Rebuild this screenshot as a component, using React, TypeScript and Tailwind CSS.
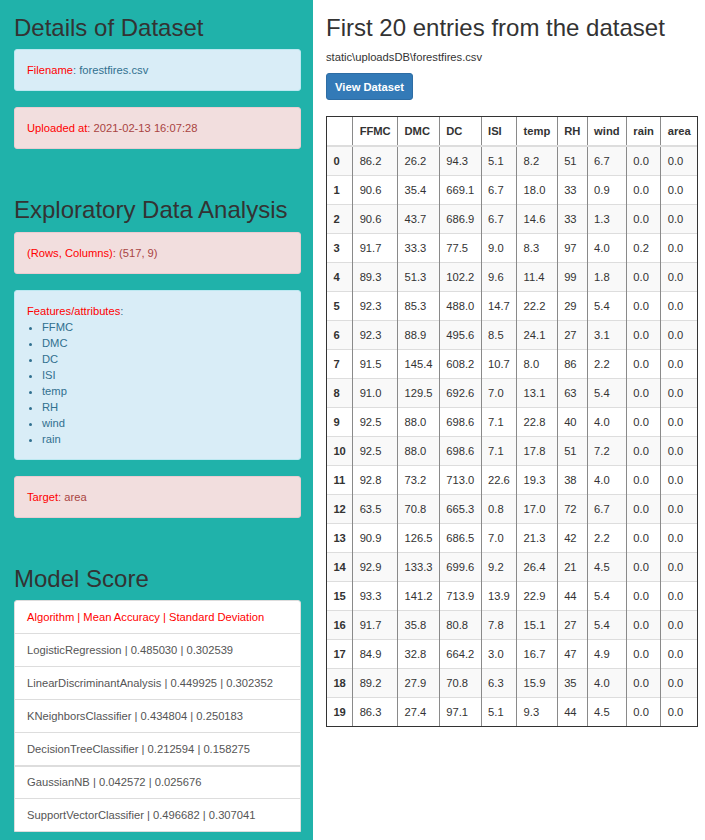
import React from "react";

const rows: string[][] = [
  ["86.2", "26.2", "94.3", "5.1", "8.2", "51", "6.7", "0.0", "0.0"],
  ["90.6", "35.4", "669.1", "6.7", "18.0", "33", "0.9", "0.0", "0.0"],
  ["90.6", "43.7", "686.9", "6.7", "14.6", "33", "1.3", "0.0", "0.0"],
  ["91.7", "33.3", "77.5", "9.0", "8.3", "97", "4.0", "0.2", "0.0"],
  ["89.3", "51.3", "102.2", "9.6", "11.4", "99", "1.8", "0.0", "0.0"],
  ["92.3", "85.3", "488.0", "14.7", "22.2", "29", "5.4", "0.0", "0.0"],
  ["92.3", "88.9", "495.6", "8.5", "24.1", "27", "3.1", "0.0", "0.0"],
  ["91.5", "145.4", "608.2", "10.7", "8.0", "86", "2.2", "0.0", "0.0"],
  ["91.0", "129.5", "692.6", "7.0", "13.1", "63", "5.4", "0.0", "0.0"],
  ["92.5", "88.0", "698.6", "7.1", "22.8", "40", "4.0", "0.0", "0.0"],
  ["92.5", "88.0", "698.6", "7.1", "17.8", "51", "7.2", "0.0", "0.0"],
  ["92.8", "73.2", "713.0", "22.6", "19.3", "38", "4.0", "0.0", "0.0"],
  ["63.5", "70.8", "665.3", "0.8", "17.0", "72", "6.7", "0.0", "0.0"],
  ["90.9", "126.5", "686.5", "7.0", "21.3", "42", "2.2", "0.0", "0.0"],
  ["92.9", "133.3", "699.6", "9.2", "26.4", "21", "4.5", "0.0", "0.0"],
  ["93.3", "141.2", "713.9", "13.9", "22.9", "44", "5.4", "0.0", "0.0"],
  ["91.7", "35.8", "80.8", "7.8", "15.1", "27", "5.4", "0.0", "0.0"],
  ["84.9", "32.8", "664.2", "3.0", "16.7", "47", "4.9", "0.0", "0.0"],
  ["89.2", "27.9", "70.8", "6.3", "15.9", "35", "4.0", "0.0", "0.0"],
  ["86.3", "27.4", "97.1", "5.1", "9.3", "44", "4.5", "0.0", "0.0"],
];

const cols = ["FFMC", "DMC", "DC", "ISI", "temp", "RH", "wind", "rain", "area"];

const features = ["FFMC", "DMC", "DC", "ISI", "temp", "RH", "wind", "rain"];

const scores = [
  "LogisticRegression | 0.485030 | 0.302539",
  "LinearDiscriminantAnalysis | 0.449925 | 0.302352",
  "KNeighborsClassifier | 0.434804 | 0.250183",
  "DecisionTreeClassifier | 0.212594 | 0.158275",
  "GaussianNB | 0.042572 | 0.025676",
  "SupportVectorClassifier | 0.496682 | 0.307041",
];

function H2({ children, className = "" }: { children: React.ReactNode; className?: string }) {
  return (
    <h2 className={`text-[24px] leading-[26.4px] font-normal text-[#333] mb-[8px] ${className}`}>
      {children}
    </h2>
  );
}

function InfoBox({ children }: { children: React.ReactNode }) {
  return (
    <div className="bg-[#d9edf7] border border-[#bce8f1] text-[#31708f] rounded-[3px] p-[12px] mb-[16px] leading-[16px]">
      {children}
    </div>
  );
}

function DangerBox({ children }: { children: React.ReactNode }) {
  return (
    <div className="bg-[#f2dede] border border-[#ebccd1] text-[#a94442] rounded-[3px] p-[12px] mb-[16px] leading-[16px]">
      {children}
    </div>
  );
}

export default function App() {
  return (
    <div
      className="flex min-h-[840px] text-[11.2px] leading-[16px] text-[#333] bg-white"
      style={{ fontFamily: '"Liberation Sans", Arial, sans-serif' }}
    >
      <aside className="w-[313px] shrink-0 bg-[#20b2aa] pl-[14px] pr-[12px] min-h-[840px] flow-root">
        <H2 className="mt-[15px]">Details of Dataset</H2>
        <InfoBox>
          <span className="text-[#f00]">Filename</span>: forestfires.csv
        </InfoBox>
        <DangerBox>
          <span className="text-[#f00]">Uploaded at</span>: 2021-02-13 16:07:28
        </DangerBox>

        <H2 className="mt-[48px]">Exploratory Data Analysis</H2>
        <DangerBox>
          <span className="text-[#f00]">(Rows, Columns)</span>: (517, 9)
        </DangerBox>
        <InfoBox>
          <div>
            <span className="text-[#f00]">Features/attributes</span>:
          </div>
          <ul className="list-disc pl-[15px]">
            {features.map((f) => (
              <li key={f}>{f}</li>
            ))}
          </ul>
        </InfoBox>
        <DangerBox>
          <span className="text-[#f00]">Target</span>: area
        </DangerBox>

        <H2 className="mt-[48px]">Model Score</H2>
        <div className="bg-white border border-[#ddd] rounded-t-[3px]">
          <div className="px-[12px] py-[8px] text-[#f00]">
            Algorithm | Mean Accuracy | Standard Deviation
          </div>
          {scores.map((s, i) => (
            <div
              key={s}
              className={`px-[12px] py-[8px] border-t border-[#ddd] text-[#555] ${
                i === 4 ? "shadow-[inset_0_1px_0_#ddd]" : ""
              }`}
            >
              {s}
            </div>
          ))}
        </div>
      </aside>

      <main className="pl-[13px] pr-[4px] flow-root">
        <H2 className="mt-[15px]">First 20 entries from the dataset</H2>
        <p className="mb-[8px]">static\uploadsDB\forestfires.csv</p>
        <button className="w-[87px] h-[27px] flex items-center justify-center bg-[#337ab7] border border-[#2e6da4] rounded-[3px] text-white font-bold">
          View Dataset
        </button>

        <div className="mt-[16px] border border-[#333] w-fit">
          <table className="border-collapse">
            <thead>
              <tr className="border-b-2 border-[#ddd]">
                <th className="px-[6.4px] py-[6px] text-left font-bold align-bottom"></th>
                {cols.map((c) => (
                  <th
                    key={c}
                    className="px-[6.4px] py-[6px] text-left font-bold align-bottom border-l border-[#8a8a8a]"
                  >
                    {c}
                  </th>
                ))}
              </tr>
            </thead>
            <tbody>
              {rows.map((r, i) => (
                <tr
                  key={i}
                  className={`${i > 0 ? "border-t border-[#ddd]" : ""} ${
                    i % 2 === 0 ? "bg-[#f9f9f9]" : "bg-white"
                  }`}
                >
                  <th className="px-[6.4px] py-[6px] text-left font-bold">{i}</th>
                  {r.map((v, j) => (
                    <td key={j} className="px-[6.4px] py-[6px] border-l border-[#8a8a8a]">
                      {v}
                    </td>
                  ))}
                </tr>
              ))}
            </tbody>
          </table>
        </div>
      </main>
    </div>
  );
}
